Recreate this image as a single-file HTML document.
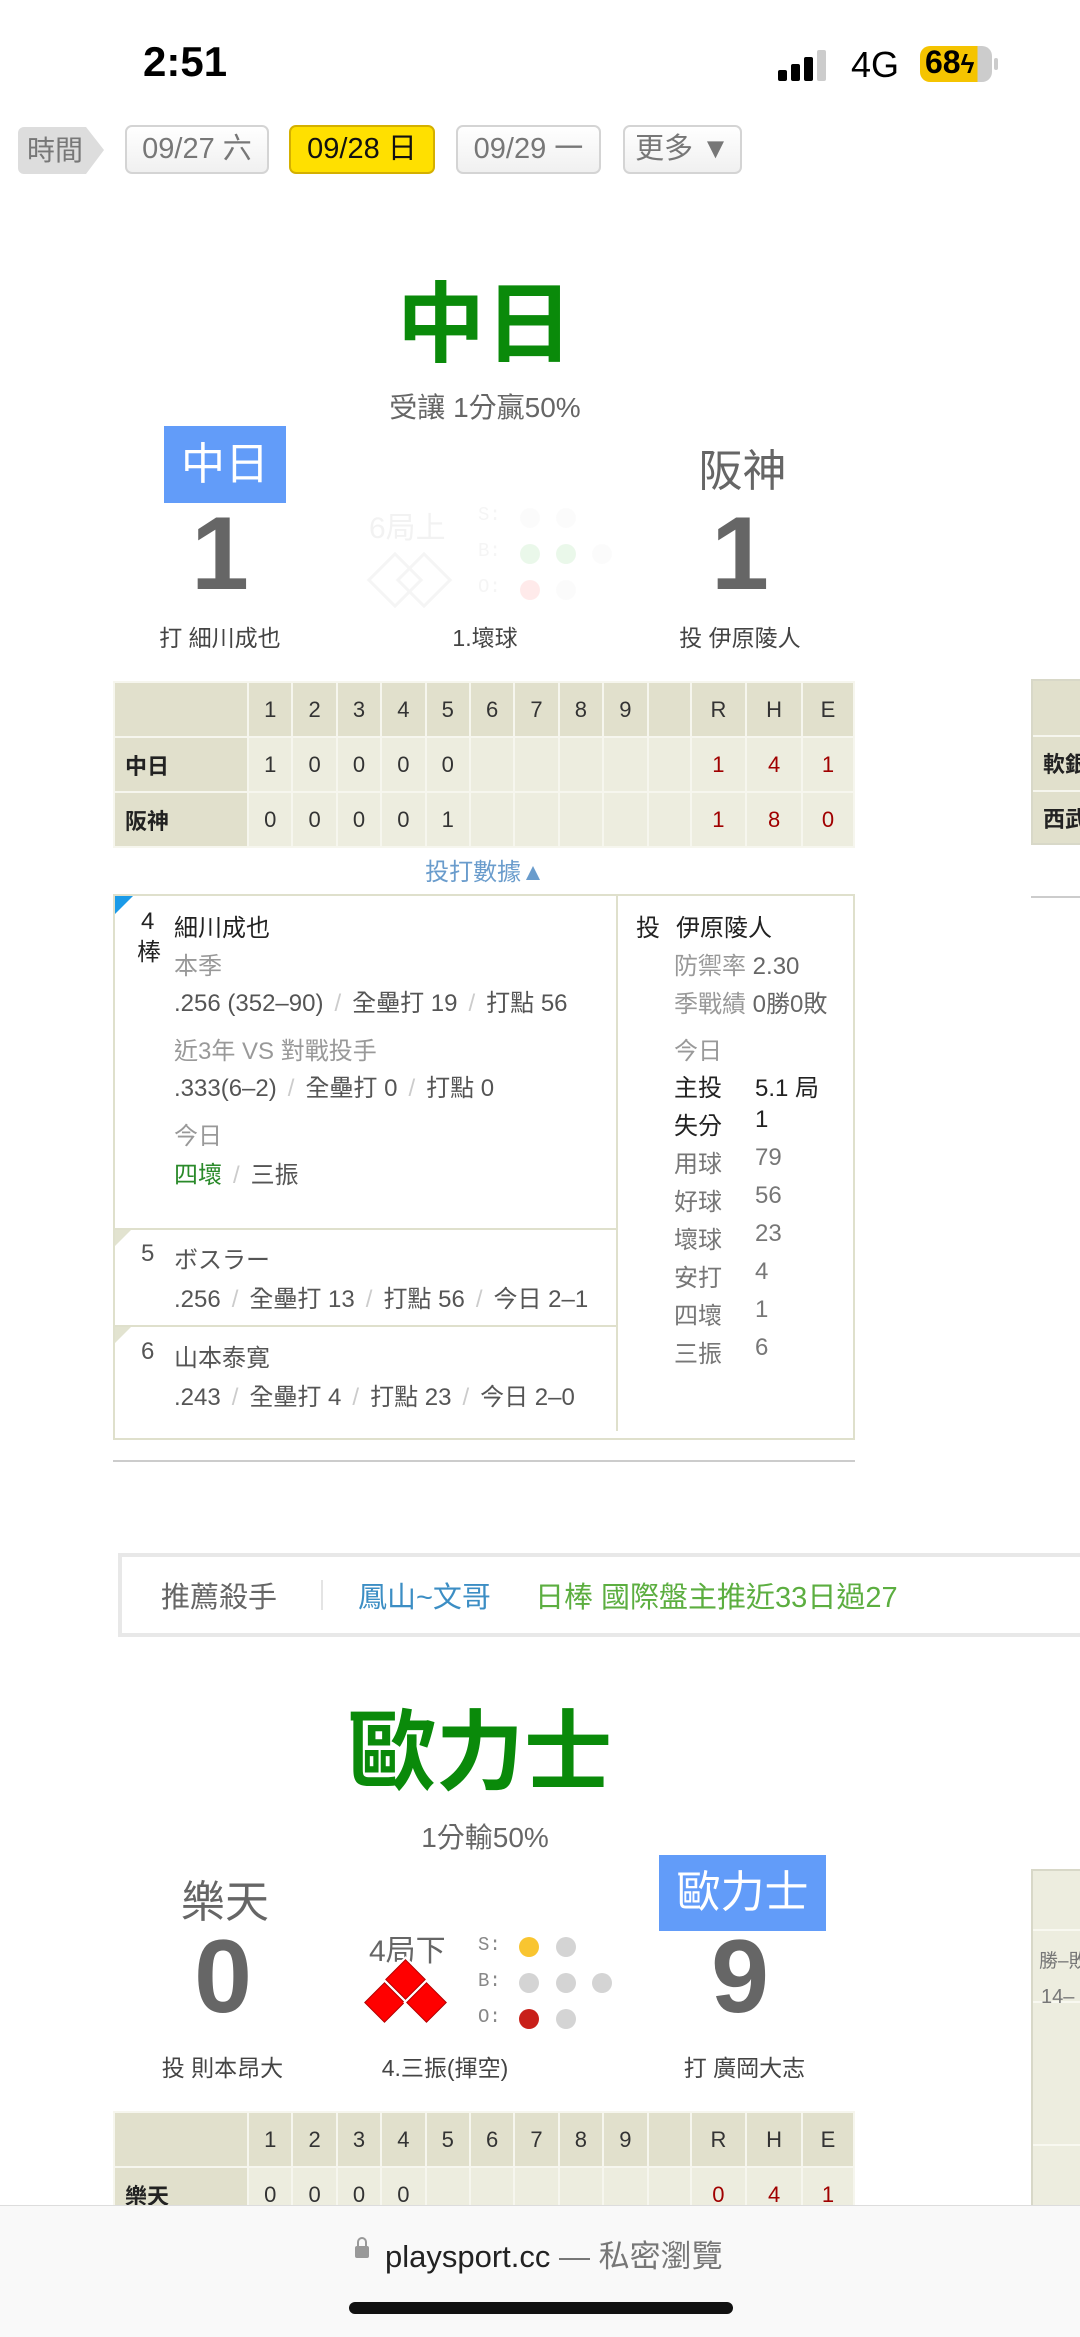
<!DOCTYPE html>
<html><head><meta charset="utf-8">
<style>
*{margin:0;padding:0;box-sizing:border-box}
body{width:1080px;height:2337px;background:#fff;position:relative;overflow:hidden;font-family:"Liberation Sans","Noto Sans CJK TC",sans-serif;color:#333}
.a{position:absolute;white-space:nowrap}
.c{text-align:center}
.btn{position:absolute;top:125px;height:49px;border:2px solid #d4d4d4;border-radius:7px;background:linear-gradient(#fff,#f0f0f0);font-size:29px;color:#777;text-align:center;line-height:45px}
table.sb{position:absolute;border-collapse:collapse;border:2px solid #d8d8c8;font-size:22px}
table.sb td{border:2px solid #f6f6ee;height:55px;text-align:center;background:#ededdf;color:#333}
table.sb tr:first-child td{background:#e1e0cc}
table.sb td.n{background:#e1e0cc;text-align:left;padding-left:10px;font-weight:bold;color:#222}
table.sb td.r{color:#a00000}
.g{color:#999}
.s{color:#ccc;margin:0 11px}
.dot{position:absolute;width:20px;height:20px;border-radius:50%;background:#d4d4d4}
.lab{font-family:"Liberation Mono",monospace;font-size:19px;color:#888}
.dm{position:absolute;width:29px;height:29px;background:#f00;border:1px solid #a00;outline:2px solid #fff;transform:rotate(45deg)}
</style></head><body>
<!-- status bar -->
<div class="a" style="left:143px;top:38px;font-size:42px;font-weight:bold;color:#000">2:51</div>
<div class="a" style="left:778px;top:70px;width:9px;height:11px;background:#000;border-radius:2px"></div>
<div class="a" style="left:791px;top:64px;width:9px;height:17px;background:#000;border-radius:2px"></div>
<div class="a" style="left:804px;top:57px;width:9px;height:24px;background:#000;border-radius:2px"></div>
<div class="a" style="left:817px;top:50px;width:9px;height:31px;background:#ccc;border-radius:2px"></div>
<div class="a" style="left:851px;top:44px;font-size:36px;color:#000">4G</div>
<div class="a" style="left:920px;top:46px;width:72px;height:36px;border-radius:10px;background:linear-gradient(90deg,#f5c400 80%,#ccc 80%)"></div>
<div class="a" style="left:994px;top:58px;width:4px;height:12px;background:#ccc;border-radius:2px"></div>
<div class="a" style="left:925px;top:44px;font-size:32px;font-weight:bold;color:#000">68<span style="font-size:26px">ϟ</span></div>

<!-- date bar -->
<div class="a" style="left:18px;top:127px;width:68px;height:47px;background:#ddd;border-radius:6px 0 0 6px;font-size:28px;color:#777;line-height:47px;padding-left:9px">時間</div>
<div class="a" style="left:86px;top:127px;width:0;height:0;border-top:23px solid transparent;border-bottom:24px solid transparent;border-left:18px solid #ddd"></div>
<div class="btn" style="left:125px;width:144px">09/27 六</div>
<div class="btn" style="left:289px;width:146px;background:#ffe000;border-color:#d4b000;color:#111">09/28 日</div>
<div class="btn" style="left:456px;width:145px">09/29 一</div>
<div class="btn" style="left:623px;width:119px">更多 ▼</div>

<!-- game 1 -->
<div class="a c" style="left:340px;top:270px;width:290px;font-size:88px;font-weight:bold;color:#0a8a0a;line-height:110px">中日</div>
<div class="a c" style="left:340px;top:386px;width:290px;font-size:28px;color:#666">受讓 1分贏50%</div>
<div class="a c" style="left:164px;top:426px;width:122px;height:77px;background:#629cf9;color:#fff;font-size:44px;line-height:77px">中日</div>
<div class="a c" style="left:680px;top:435px;width:125px;font-size:44px;color:#666">阪神</div>
<div class="a c" style="left:160px;top:495px;width:120px;font-size:104px;font-weight:bold;color:#666">1</div>
<div class="a c" style="left:680px;top:495px;width:120px;font-size:104px;font-weight:bold;color:#666">1</div>
<div style="opacity:0.08">
<div class="a" style="left:369px;top:503px;font-size:30px;color:#666">6局上</div>
<div class="a" style="left:375px;top:560px;width:40px;height:40px;border:3px solid #888;transform:rotate(45deg)"></div>
<div class="a" style="left:404px;top:560px;width:40px;height:40px;border:3px solid #888;transform:rotate(45deg)"></div>
<div class="a lab" style="left:478px;top:504px">S:</div><div class="a lab" style="left:478px;top:540px">B:</div><div class="a lab" style="left:478px;top:576px">O:</div>
<div class="dot" style="left:520px;top:508px"></div><div class="dot" style="left:556px;top:508px"></div>
<div class="dot" style="left:520px;top:544px;background:#0a0"></div><div class="dot" style="left:556px;top:544px;background:#0a0"></div><div class="dot" style="left:592px;top:544px"></div>
<div class="dot" style="left:520px;top:580px;background:#f00"></div><div class="dot" style="left:556px;top:580px"></div>
</div>
<div class="a c" style="left:140px;top:619px;width:160px;font-size:23px;color:#444">打 細川成也</div>
<div class="a c" style="left:400px;top:619px;width:170px;font-size:23px;color:#444">1.壞球</div>
<div class="a c" style="left:660px;top:619px;width:160px;font-size:23px;color:#444">投 伊原陵人</div>

<table class="sb" style="left:113px;top:681px;width:742px">
<tr><td style="width:134px"></td><td>1</td><td>2</td><td>3</td><td>4</td><td>5</td><td>6</td><td>7</td><td>8</td><td>9</td><td style="width:43px"></td><td>R</td><td>H</td><td>E</td></tr>
<tr><td class="n">中日</td><td>1</td><td>0</td><td>0</td><td>0</td><td>0</td><td></td><td></td><td></td><td></td><td></td><td class="r">1</td><td class="r">4</td><td class="r">1</td></tr>
<tr><td class="n">阪神</td><td>0</td><td>0</td><td>0</td><td>0</td><td>1</td><td></td><td></td><td></td><td></td><td></td><td class="r">1</td><td class="r">8</td><td class="r">0</td></tr>
</table>
<div class="a" style="left:1031px;top:679px;width:60px;height:166px;border:2px solid #d8d8c8;background:#e1e0cc"></div>
<div class="a" style="left:1033px;top:735px;width:60px;height:2px;background:#f6f6ee"></div>
<div class="a" style="left:1033px;top:790px;width:60px;height:2px;background:#f6f6ee"></div>
<div class="a" style="left:1043px;top:747px;font-size:22px;font-weight:bold;color:#222">軟銀</div>
<div class="a" style="left:1043px;top:802px;font-size:22px;font-weight:bold;color:#222">西武</div>
<div class="a" style="left:1031px;top:896px;width:60px;height:2px;background:#ccc"></div>

<div class="a c" style="left:400px;top:852px;width:170px;font-size:24px;color:#6a9ccc">投打數據▲</div>

<div class="a" style="left:113px;top:894px;width:742px;height:546px;border:2px solid #dfe0cc"></div>
<div class="a" style="left:616px;top:896px;width:2px;height:535px;background:#dfe0cc"></div>
<div class="a" style="left:115px;top:1228px;width:501px;height:2px;background:#dfe0cc"></div>
<div class="a" style="left:115px;top:1325px;width:501px;height:2px;background:#dfe0cc"></div>
<div class="a" style="left:115px;top:896px;width:0;height:0;border-top:18px solid #1a9ae8;border-right:18px solid transparent"></div>
<div class="a" style="left:115px;top:1230px;width:0;height:0;border-top:16px solid #e2e3d0;border-right:16px solid transparent"></div>
<div class="a" style="left:115px;top:1327px;width:0;height:0;border-top:16px solid #e2e3d0;border-right:16px solid transparent"></div>

<div style="font-size:24px">
<div class="a" style="left:141px;top:908px;color:#222">4</div>
<div class="a" style="left:137px;top:932px;color:#222">棒</div>
<div class="a" style="left:174px;top:908px;color:#222">細川成也</div>
<div class="a g" style="left:174px;top:946px">本季</div>
<div class="a" style="left:174px;top:983px;color:#555">.256 (352–90)<span class="s">/</span>全壘打 19<span class="s">/</span>打點 56</div>
<div class="a g" style="left:174px;top:1031px">近3年 VS 對戰投手</div>
<div class="a" style="left:174px;top:1068px;color:#555">.333(6–2)<span class="s">/</span>全壘打 0<span class="s">/</span>打點 0</div>
<div class="a g" style="left:174px;top:1116px">今日</div>
<div class="a" style="left:174px;top:1155px;color:#555"><span style="color:#2a8a2a">四壞</span><span class="s">/</span>三振</div>
<div class="a" style="left:141px;top:1240px;color:#555">5</div>
<div class="a" style="left:174px;top:1240px;color:#555">ボスラー</div>
<div class="a" style="left:174px;top:1279px;color:#555">.256<span class="s">/</span>全壘打 13<span class="s">/</span>打點 56<span class="s">/</span>今日 2–1</div>
<div class="a" style="left:141px;top:1338px;color:#555">6</div>
<div class="a" style="left:174px;top:1338px;color:#555">山本泰寛</div>
<div class="a" style="left:174px;top:1377px;color:#555">.243<span class="s">/</span>全壘打 4<span class="s">/</span>打點 23<span class="s">/</span>今日 2–0</div>

<div class="a" style="left:636px;top:908px;color:#222">投</div>
<div class="a" style="left:676px;top:908px;color:#222">伊原陵人</div>
<div class="a g" style="left:674px;top:946px">防禦率 <span style="color:#666">2.30</span></div>
<div class="a g" style="left:674px;top:984px">季戰績 <span style="color:#666">0勝0敗</span></div>
<div class="a g" style="left:674px;top:1031px">今日</div>
<div class="a" style="left:674px;top:1068px;color:#222">主投</div><div class="a" style="left:755px;top:1068px;color:#222">5.1 局</div>
<div class="a" style="left:674px;top:1106px;color:#222">失分</div><div class="a" style="left:755px;top:1106px;color:#222">1</div>
<div class="a" style="left:674px;top:1144px;color:#777">用球</div><div class="a" style="left:755px;top:1144px;color:#777">79</div>
<div class="a" style="left:674px;top:1182px;color:#777">好球</div><div class="a" style="left:755px;top:1182px;color:#777">56</div>
<div class="a" style="left:674px;top:1220px;color:#777">壞球</div><div class="a" style="left:755px;top:1220px;color:#777">23</div>
<div class="a" style="left:674px;top:1258px;color:#777">安打</div><div class="a" style="left:755px;top:1258px;color:#777">4</div>
<div class="a" style="left:674px;top:1296px;color:#777">四壞</div><div class="a" style="left:755px;top:1296px;color:#777">1</div>
<div class="a" style="left:674px;top:1334px;color:#777">三振</div><div class="a" style="left:755px;top:1334px;color:#777">6</div>
</div>
<div class="a" style="left:113px;top:1460px;width:742px;height:2px;background:#ccc"></div>

<!-- recommend bar -->
<div class="a" style="left:118px;top:1553px;width:970px;height:84px;border:4px solid #e8e8e8;background:#fff"></div>
<div class="a" style="left:161px;top:1574px;font-size:29px;color:#666">推薦殺手</div>
<div class="a" style="left:321px;top:1580px;width:2px;height:30px;background:#e4e4e4"></div>
<div class="a" style="left:358px;top:1574px;font-size:29px;color:#3c8ec4">鳳山~文哥</div>
<div class="a" style="left:535px;top:1574px;font-size:29px;color:#5cae40">日棒 國際盤主推近33日過27</div>

<!-- game 2 -->
<div class="a c" style="left:330px;top:1698px;width:300px;font-size:88px;font-weight:bold;color:#0a8a0a;line-height:110px">歐力士</div>
<div class="a c" style="left:380px;top:1816px;width:210px;font-size:28px;color:#666">1分輸50%</div>
<div class="a c" style="left:160px;top:1866px;width:130px;font-size:44px;color:#666">樂天</div>
<div class="a c" style="left:659px;top:1855px;width:167px;height:76px;background:#629cf9;color:#fff;font-size:44px;line-height:76px">歐力士</div>
<div class="a c" style="left:163px;top:1918px;width:120px;font-size:104px;font-weight:bold;color:#666">0</div>
<div class="a c" style="left:680px;top:1918px;width:120px;font-size:104px;font-weight:bold;color:#666">9</div>
<div class="a" style="left:369px;top:1926px;font-size:30px;color:#666">4局下</div>
<div class="dm" style="left:391px;top:1965px"></div>
<div class="dm" style="left:370px;top:1988px"></div>
<div class="dm" style="left:412px;top:1988px"></div>
<div class="a lab" style="left:478px;top:1934px">S:</div><div class="a lab" style="left:478px;top:1970px">B:</div><div class="a lab" style="left:478px;top:2006px">O:</div>
<div class="dot" style="left:519px;top:1937px;background:#f9c530"></div><div class="dot" style="left:556px;top:1937px"></div>
<div class="dot" style="left:519px;top:1973px"></div><div class="dot" style="left:556px;top:1973px"></div><div class="dot" style="left:592px;top:1973px"></div>
<div class="dot" style="left:519px;top:2009px;background:#c8201a"></div><div class="dot" style="left:556px;top:2009px"></div>
<div class="a c" style="left:140px;top:2049px;width:165px;font-size:23px;color:#444">投 則本昂大</div>
<div class="a c" style="left:360px;top:2049px;width:170px;font-size:23px;color:#444">4.三振(揮空)</div>
<div class="a c" style="left:662px;top:2049px;width:165px;font-size:23px;color:#444">打 廣岡大志</div>

<table class="sb" style="left:113px;top:2111px;width:742px">
<tr><td style="width:134px"></td><td>1</td><td>2</td><td>3</td><td>4</td><td>5</td><td>6</td><td>7</td><td>8</td><td>9</td><td style="width:43px"></td><td>R</td><td>H</td><td>E</td></tr>
<tr><td class="n">樂天</td><td>0</td><td>0</td><td>0</td><td>0</td><td></td><td></td><td></td><td></td><td></td><td></td><td class="r">0</td><td class="r">4</td><td class="r">1</td></tr>
</table>
<div class="a" style="left:1031px;top:1869px;width:60px;height:340px;border:2px solid #d8d8c8;background:#ededdf"></div>
<div class="a" style="left:1033px;top:1929px;width:60px;height:2px;background:#f8f8f0"></div>
<div class="a" style="left:1033px;top:2001px;width:60px;height:2px;background:#f8f8f0"></div>
<div class="a" style="left:1033px;top:2144px;width:60px;height:2px;background:#f8f8f0"></div>
<div class="a" style="left:1039px;top:1946px;font-size:19px;color:#777">勝–敗</div>
<div class="a" style="left:1041px;top:1986px;font-size:20px;color:#777">14–</div>

<!-- bottom bar -->
<div class="a" style="left:0;top:2205px;width:1080px;height:132px;background:#f9f9f9;border-top:1px solid #ddd"></div>
<div class="a" style="left:355px;top:2246px;width:14px;height:12px;background:#999;border-radius:2px"></div>
<div class="a" style="left:357px;top:2237px;width:10px;height:12px;border:2px solid #999;border-bottom:none;border-radius:5px 5px 0 0"></div>
<div class="a" style="left:385px;top:2231px;font-size:31px;color:#222">playsport.cc <span style="color:#777">— 私密瀏覽</span></div>
<div class="a" style="left:349px;top:2302px;width:384px;height:12px;background:#111;border-radius:6px"></div>
</body></html>
